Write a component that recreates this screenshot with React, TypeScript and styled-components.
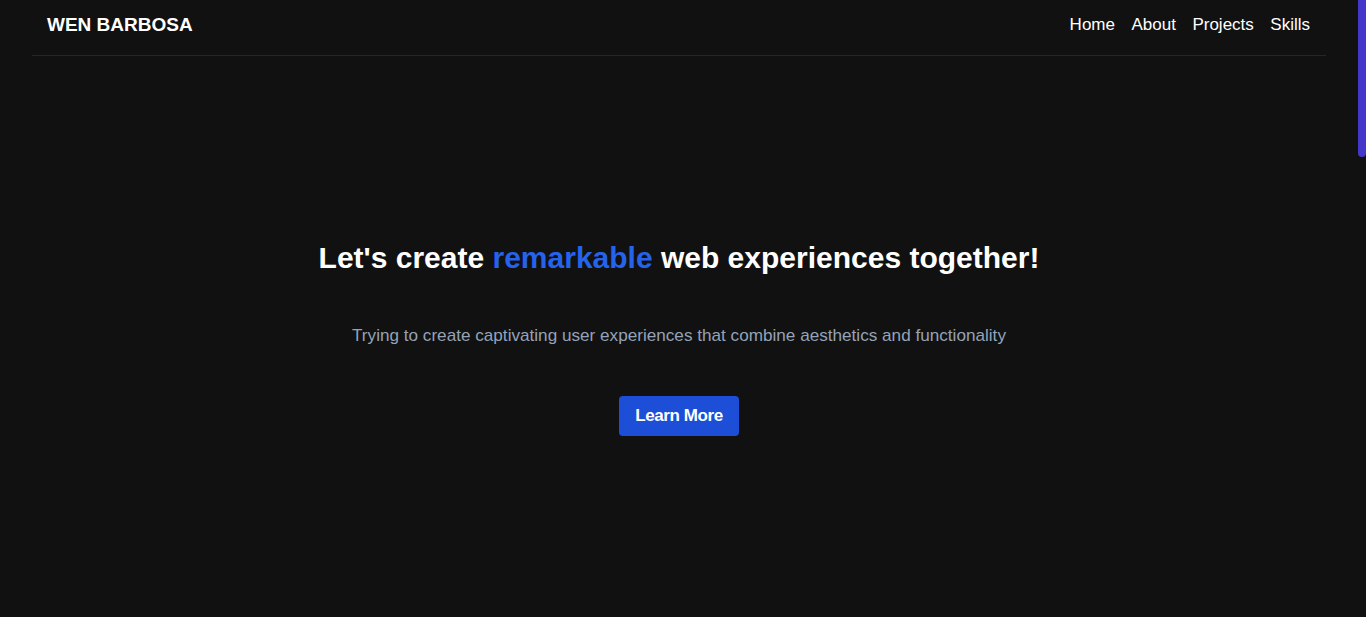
import React from "react";
import styled, { createGlobalStyle } from "styled-components";

const GlobalStyle = createGlobalStyle`
  html, body {
    margin: 0;
    padding: 0;
    height: 100%;
    overflow: hidden;
    background: #111111;
    font-family: "Liberation Sans", Arial, sans-serif;
  }
  #root {
    height: 100%;
  }
`;

const Frame = styled.div`
  height: 100vh;
  display: flex;
  background: #111111;
  color: #ffffff;
`;

const Content = styled.div`
  flex: 1;
  min-width: 0;
  overflow: hidden;
`;

const ScrollTrack = styled.div`
  width: 8px;
  flex-shrink: 0;
  background: #111111;
`;

const ScrollThumb = styled.div`
  height: 157px;
  background: #4338ca;
  border-radius: 0 0 4px 4px;
`;

const Header = styled.header`
  margin: 0 32px;
  height: 56px;
  padding: 0 16px 5px 15px;
  display: flex;
  align-items: center;
  justify-content: space-between;
  border-bottom: 1px solid #262626;
  box-sizing: border-box;
`;

const Logo = styled.div`
  font-size: 19px;
  font-weight: 700;
`;

const Nav = styled.nav`
  display: flex;
  gap: 16.5px;
`;

const NavLink = styled.a`
  color: #ffffff;
  font-size: 17px;
  text-decoration: none;
  cursor: pointer;
`;

const Hero = styled.section`
  height: 561px;
  display: flex;
  flex-direction: column;
  align-items: center;
  padding-top: 184px;
  box-sizing: border-box;
`;

const Title = styled.h1`
  margin: 0;
  font-size: 30px;
  font-weight: 700;
  line-height: 36px;
`;

const Accent = styled.span`
  color: #2563eb;
`;

const Subtitle = styled.p`
  margin: 47px 0 0;
  font-size: 17.15px;
  color: #94a3b8;
  line-height: 24px;
`;

const Button = styled.button`
  margin-top: 49px;
  width: 120px;
  height: 40px;
  border: none;
  border-radius: 4px;
  background: #1d4ed8;
  color: #ffffff;
  font-family: "Liberation Sans", Arial, sans-serif;
  font-size: 17px;
  font-weight: 700;
  letter-spacing: -0.4px;
  cursor: pointer;
`;

export default function App() {
  return (
    <Frame>
      <GlobalStyle />
      <Content>
        <Header>
          <Logo>WEN BARBOSA</Logo>
          <Nav>
            <NavLink>Home</NavLink>
            <NavLink>About</NavLink>
            <NavLink>Projects</NavLink>
            <NavLink>Skills</NavLink>
          </Nav>
        </Header>
        <Hero>
          <Title>
            Let's create <Accent>remarkable</Accent> web experiences together!
          </Title>
          <Subtitle>
            Trying to create captivating user experiences that combine aesthetics and functionality
          </Subtitle>
          <Button>Learn More</Button>
        </Hero>
      </Content>
      <ScrollTrack>
        <ScrollThumb />
      </ScrollTrack>
    </Frame>
  );
}
